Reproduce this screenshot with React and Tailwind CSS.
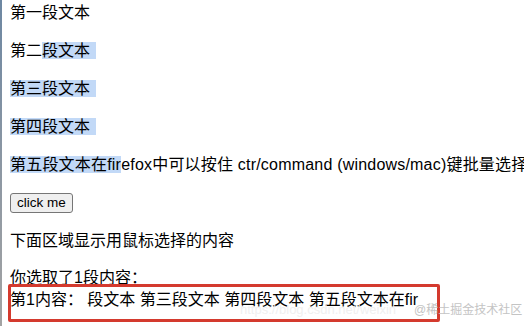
import React from 'react';

const font = { fontFamily: '"Liberation Sans", "Noto Sans CJK SC", sans-serif' };

function Sel({ children, tail = true }) {
  return <span className={`bg-[#c2d9f7] ${tail ? 'pr-[6px]' : ''}`}>{children}</span>;
}

export default function App() {
  return (
    <div className="flex w-[524px] h-[326px] overflow-hidden bg-white text-black" style={font}>
      <div className="w-[2px] shrink-0 bg-gradient-to-b from-[#6d87a2] via-[#8c97a3] to-[#a3a3a3]" />
      <div className="relative flex-1 pl-[8px] pt-[2px] text-[16px] leading-[22px] whitespace-nowrap">
        <p>第一段文本</p>
        <p className="mt-[16px]">第二<Sel>段文本</Sel></p>
        <p className="mt-[16px]"><Sel>第三段文本</Sel></p>
        <p className="mt-[16px]"><Sel>第四段文本</Sel></p>
        <p className="mt-[16px] tracking-[0.2px]">
          <Sel tail={false}>第五段文本在fir</Sel>efox中可以按住 ctr/command (windows/mac)键批量选择
        </p>
        <div className="mt-[16px] h-[22px] flex items-center">
          <button className="h-[20px] px-[6px] border border-[#767676] rounded-[3px] bg-[#efefef] text-[13.5px] leading-none">
            click me
          </button>
        </div>
        <p className="mt-[16px]">下面区域显示用鼠标选择的内容</p>
        <p className="mt-[15px]">你选取了1段内容：</p>
        <p>第1内容：&nbsp;段文本 第三段文本 第四段文本 第五段文本在fir</p>

        <div className="absolute left-[6px] top-[284px] w-[432px] h-[38px] border-[3px] border-[#d43a2e] rounded-[2px]" />
        <div className="absolute left-[238px] top-[299px] text-[13px] text-[#f0f0f0]">https://blog.csdn.net/weixin</div>
        <div className="absolute left-[412px] top-[299px] text-[12px] text-[#c4c4c4]">@稀土掘金技术社区</div>
      </div>
    </div>
  );
}
